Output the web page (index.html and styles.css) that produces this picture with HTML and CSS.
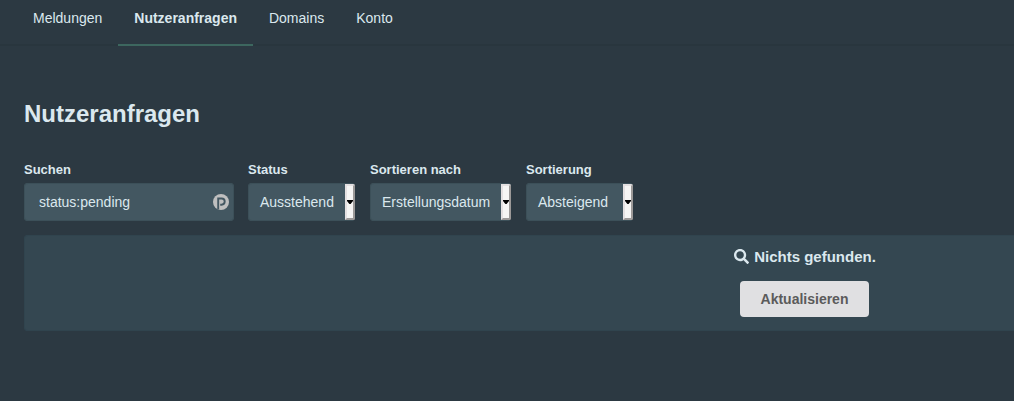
FILE: index.html
```
<!DOCTYPE html>
<html lang="de">
<head>
    <meta charset="utf-8">
    <title>Nutzeranfragen</title>
    <link rel="stylesheet" href="styles.css">
</head>
<body>
<nav class="tabs">
    <a class="tab">Meldungen</a>
    <a class="tab active">Nutzeranfragen</a>
    <a class="tab">Domains</a>
    <a class="tab">Konto</a>
</nav>

<main class="content">
    <h1>Nutzeranfragen</h1>

    <form class="filters">
        <div class="field search">
            <label>Suchen</label>
            <div class="control">
                <span class="value">status:pending</span>
                <svg class="pass" width="16" height="16" viewBox="0 0 16 16">
                    <circle cx="8" cy="8" r="8" fill="#bfbfbf"/>
                    <path d="M5.200 15.500V4.500h3.400a3.100 3.100 0 0 1 0 6.200H7.200" fill="none" stroke="#435761" stroke-width="1.900"/>
                </svg>
            </div>
        </div>
        <div class="field status">
            <label>Status</label>
            <div class="control">
                <span class="value">Ausstehend</span>
                <span class="arrow"></span>
            </div>
        </div>
        <div class="field sort">
            <label>Sortieren nach</label>
            <div class="control">
                <span class="value">Erstellungsdatum</span>
                <span class="arrow"></span>
            </div>
        </div>
        <div class="field order">
            <label>Sortierung</label>
            <div class="control">
                <span class="value">Absteigend</span>
                <span class="arrow"></span>
            </div>
        </div>
    </form>

    <div class="panel">
        <div class="message">
            <svg width="15" height="15" viewBox="0 0 512 512">
                <path fill="currentColor" d="M505 442.700L405.300 343c-4.500-4.500-10.600-7-17-7H372c27.600-35.300 44-79.700 44-128C416 93.100 322.900 0 208 0S0 93.100 0 208s93.100 208 208 208c48.300 0 92.700-16.400 128-44v16.300c0 6.400 2.500 12.500 7 17l99.700 99.700c9.400 9.400 24.600 9.400 33.900 0l28.300-28.300c9.400-9.400 9.400-24.600.1-34zM208 336c-70.700 0-128-57.200-128-128 0-70.700 57.200-128 128-128 70.700 0 128 57.200 128 128 0 70.700-57.200 128-128 128z"/>
            </svg>
            <span>Nichts gefunden.</span>
        </div>
        <button type="button">Aktualisieren</button>
    </div>
</main>
</body>
</html>
```

FILE: styles.css
```
* {
    box-sizing: border-box;
}

body {
    margin: 0;
    height: 401px;
    overflow: hidden;
    background: #2c3942;
    color: #dbe8ee;
    font: 14px/20px "Liberation Sans", Arial, sans-serif;
}

/* Navigation */
.tabs {
    display: flex;
    height: 46px;
    padding-left: 17px;
    box-shadow: inset 0 -2px #29363e;
}

.tab {
    padding: 8px 16px 0;
    border-bottom: 2px solid transparent;
}

.tab.active {
    font-weight: bold;
    border-bottom-color: #3d675f;
}

.content {
    padding: 52px 0 0 24px;
    overflow: hidden;
}

h1 {
    margin: 0;
    font-size: 24px;
    line-height: 32px;
}

/* Filters */
.filters {
    display: flex;
    margin-top: 30px;
}

.field {
    margin-right: 15px;
}

.field label {
    display: block;
    height: 23px;
    font-size: 13px;
    font-weight: bold;
    line-height: 19px;
}

.control {
    display: flex;
    align-items: center;
    justify-content: space-between;
    height: 38px;
    padding: 1px 0 1px 12px;
    border-radius: 4px;
    background: #435761;
    box-shadow: inset 0 0 0 1px #3c5059;
}

.search {
    width: 210px;
    margin-right: 14px;
}

.search .control {
    padding: 0 5px 0 15px;
}

.status,
.order {
    width: 107px;
}

.sort {
    width: 141px;
}

.arrow {
    display: flex;
    align-items: center;
    justify-content: center;
    width: 10px;
    height: 36px;
    border: 2px solid;
    border-color: #e4e0e1 #9c9998 #9c9998 #e4e0e1;
    border-radius: 0 2px 2px 0;
    background: #f6f5f4;
}

.arrow::before {
    content: "";
    flex: none;
    width: 6px;
    height: 4px;
    background: #000;
    clip-path: polygon(0 0, 100% 0, 100% 25%, 60% 100%, 40% 100%, 0 25%);
}

/* Result list, runs past the right edge */
.panel {
    display: flex;
    flex-direction: column;
    align-items: center;
    width: 1561px;
    height: 96px;
    margin-top: 14px;
    padding-top: 12px;
    border-radius: 4px;
    background: #344751;
    box-shadow: inset 0 0 0 1px #30444e;
}

.message {
    display: flex;
    align-items: center;
    gap: 5px;
    padding-left: 1px;
    font-size: 15px;
    font-weight: bold;
}

.message svg {
    margin-top: -1px;
}

button {
    width: 129px;
    height: 36px;
    margin-top: 14px;
    padding: 0;
    border: 0;
    border-radius: 4px;
    background: #e0e0e2;
    color: #5b5b5b;
    font: bold 14px "Liberation Sans", Arial, sans-serif;
}
```
